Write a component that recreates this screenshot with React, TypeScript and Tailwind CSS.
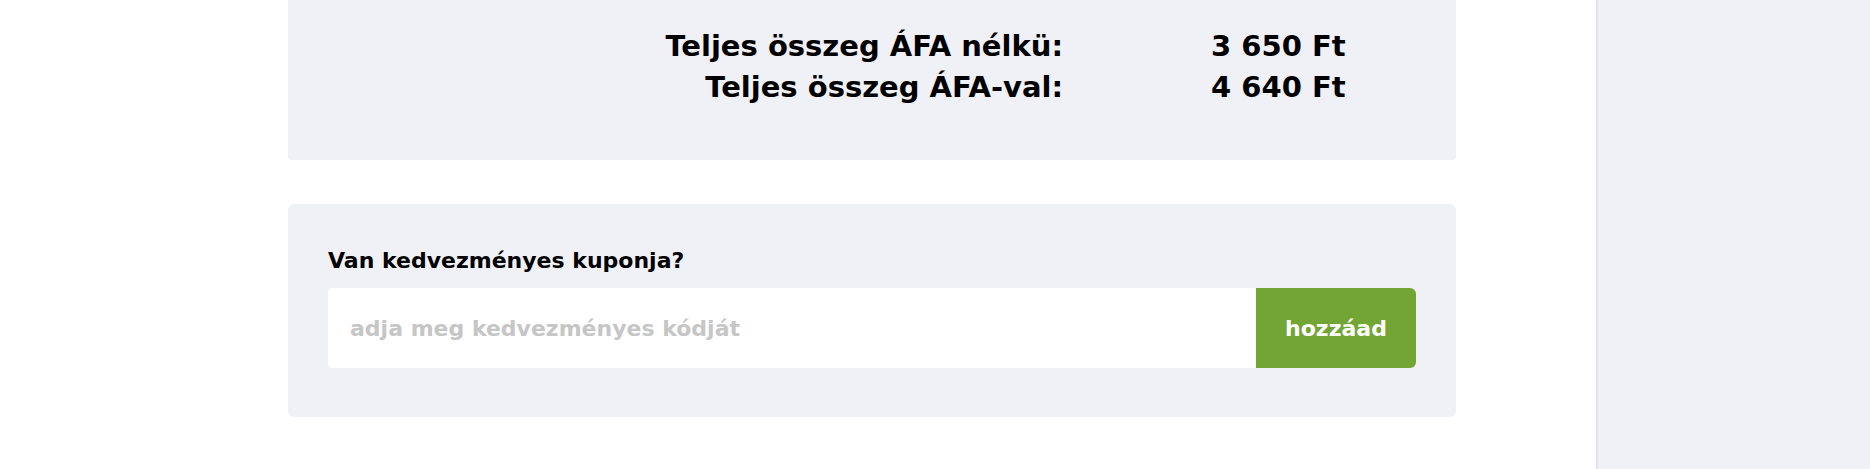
import React from 'react';

const totals = [
  { label: 'Teljes összeg ÁFA nélkü:', value: '3 650 Ft' },
  { label: 'Teljes összeg ÁFA-val:', value: '4 640 Ft' },
];

const App = () => {
  return (
    <div className="flex h-[469px] w-full overflow-hidden bg-white text-black" style={{ fontFamily: '"DejaVu Sans", "Noto Sans", sans-serif' }}>
      {/* main column */}
      <main className="flex-1 pl-[288px]">
        <div className="w-[1168px]">
          {/* order totals */}
          <section className="h-[160px] rounded-b bg-[#f0f1f6] pt-[26px]">
            <div className="grid grid-cols-[775px_1fr] gap-x-[148px] text-[29px] font-bold leading-[41px]">
              {totals.map((row) => (
                <React.Fragment key={row.label}>
                  <span className="text-right">{row.label}</span>
                  <span>{row.value}</span>
                </React.Fragment>
              ))}
            </div>
          </section>

          {/* coupon */}
          <section className="mt-[44px] rounded-md bg-[#f0f1f6] px-[40px] pt-[43px] pb-[49px]">
            <label className="mb-[13px] block text-[22px] font-bold leading-[28px]">Van kedvezményes kuponja?</label>
            <div className="flex h-[80px]">
              <input
                type="text"
                placeholder="adja meg kedvezményes kódját"
                className="h-full flex-1 rounded-l bg-white px-[22px] text-[22px] font-bold outline-none placeholder:text-[#c6c6c6]"
              />
              <button className="h-full w-[160px] rounded-r-md bg-[#72a534] text-[22px] font-bold text-white">hozzáad</button>
            </div>
          </section>
        </div>
      </main>

      {/* sidebar */}
      <aside className="w-[274px] border-l-2 border-[#e1e2ea] bg-[#f0f1f6]" />
    </div>
  );
};

export default App;
